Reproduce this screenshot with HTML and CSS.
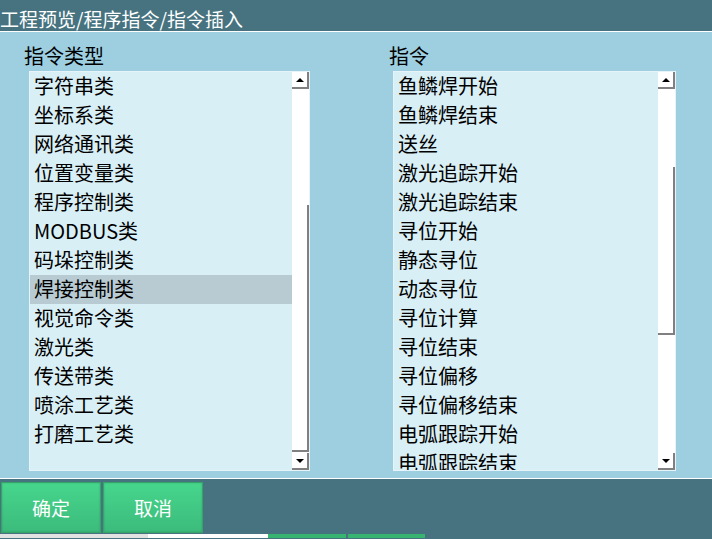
FILE: index.html
```html
<!DOCTYPE html>
<html lang="zh-CN">
<head>
    <meta charset="UTF-8">
    <meta name="viewport" content="width=device-width, initial-scale=1.0">
    <title>指令插入</title>
    <link rel="stylesheet" href="styles.css">
</head>
<body>
    <div class="screen">
        <div class="titlebar">工程预览/程序指令/指令插入</div>

        <div class="main">
            <div class="column column-left">
                <div class="label">指令类型</div>
                <div class="listbox">
                    <ul class="items">
                        <li>字符串类</li>
                        <li>坐标系类</li>
                        <li>网络通讯类</li>
                        <li>位置变量类</li>
                        <li>程序控制类</li>
                        <li>MODBUS类</li>
                        <li>码垛控制类</li>
                        <li class="selected">焊接控制类</li>
                        <li>视觉命令类</li>
                        <li>激光类</li>
                        <li>传送带类</li>
                        <li>喷涂工艺类</li>
                        <li>打磨工艺类</li>
                    </ul>
                    <div class="scrollbar">
                        <div class="sb-btn"><span class="arrow-up"></span></div>
                        <div class="sb-track">
                            <div class="sb-thumb" style="margin-top: 116px; height: 247px;"></div>
                        </div>
                        <div class="sb-btn"><span class="arrow-down"></span></div>
                    </div>
                </div>
            </div>

            <div class="column column-right">
                <div class="label">指令</div>
                <div class="listbox">
                    <ul class="items">
                        <li>鱼鳞焊开始</li>
                        <li>鱼鳞焊结束</li>
                        <li>送丝</li>
                        <li>激光追踪开始</li>
                        <li>激光追踪结束</li>
                        <li>寻位开始</li>
                        <li>静态寻位</li>
                        <li>动态寻位</li>
                        <li>寻位计算</li>
                        <li>寻位结束</li>
                        <li>寻位偏移</li>
                        <li>寻位偏移结束</li>
                        <li>电弧跟踪开始</li>
                        <li>电弧跟踪结束</li>
                    </ul>
                    <div class="scrollbar">
                        <div class="sb-btn"><span class="arrow-up"></span></div>
                        <div class="sb-track">
                            <div class="sb-thumb" style="margin-top: 78px; height: 168px;"></div>
                        </div>
                        <div class="sb-btn"><span class="arrow-down"></span></div>
                    </div>
                </div>
            </div>
        </div>

        <div class="footer">
            <button class="btn">确定</button>
            <button class="btn">取消</button>
        </div>

        <div class="taskstrip">
            <div class="ts-gray"></div>
            <div class="ts-white"></div>
            <div class="ts-green"></div>
            <div class="ts-green ts-green2"></div>
        </div>
    </div>
</body>
</html>
```

FILE: styles.css
```css
body {
    margin: 0;
    padding: 0;
    font-family: "Noto Sans CJK SC", "Noto Sans", sans-serif;
    background-color: #46737f;
}

.screen {
    width: 712px;
    height: 539px;
    display: flex;
    flex-direction: column;
    overflow: hidden;
}

.titlebar {
    height: 31px;
    border-bottom: 1px solid #ffffff;
    background: #46737f;
    color: #ffffff;
    font-size: 19px;
    line-height: 38px;
    white-space: nowrap;
    overflow: hidden;
}

.main {
    height: 446px;
    background: #9dcfe1;
    border-bottom: 1px solid #ffffff;
    display: flex;
}

.column {
    display: flex;
    flex-direction: column;
}

.column-left {
    margin-left: 24px;
    width: 286px;
}

.column-right {
    margin-left: 79px;
    width: 287px;
}

.label {
    height: 39px;
    font-size: 20px;
    line-height: 47px;
    color: #000000;
}

.column-left .listbox {
    margin-left: 5px;
}

.column-right .listbox {
    margin-left: 4px;
}

.listbox {
    height: 398px;
    border: 1px solid #e6f4f9;
    display: flex;
    background: #d9eff6;
}

.items {
    flex: 1;
    list-style-type: none;
    margin: 0;
    padding: 0;
    overflow: hidden;
}

.items li {
    height: 29px;
    line-height: 28px;
    padding-left: 4px;
    font-size: 20px;
    color: #000000;
    white-space: nowrap;
}

.items li.selected {
    background: #b9cbd2;
}

.scrollbar {
    width: 17px;
    background: #ffffff;
    display: flex;
    flex-direction: column;
}

.sb-btn {
    width: 15px;
    height: 15px;
    background: #ffffff;
    border-right: 2px solid #808080;
    border-bottom: 2px solid #808080;
    display: flex;
    justify-content: center;
    align-items: center;
}

.sb-track {
    flex: 1;
    display: flex;
    flex-direction: column;
}

.sb-thumb {
    width: 17px;
    background: #ffffff;
    border-right: 2px solid #808080;
    border-bottom: 2px solid #808080;
    box-sizing: border-box;
}

.arrow-up {
    width: 0;
    height: 0;
    border-left: 4px solid transparent;
    border-right: 4px solid transparent;
    border-bottom: 4px solid #000000;
}

.arrow-down {
    width: 0;
    height: 0;
    border-left: 4px solid transparent;
    border-right: 4px solid transparent;
    border-top: 4px solid #000000;
}

.footer {
    height: 55px;
    background: #46737f;
    display: flex;
    align-items: flex-start;
    padding-top: 3px;
    padding-left: 1px;
    gap: 2px;
    box-sizing: border-box;
}

.btn {
    width: 100px;
    height: 51px;
    border: 1px solid #34a469;
    background: linear-gradient(#46d68c, #3cbb7c);
    box-shadow: inset 0 0 2px rgba(0,0,0,0.2);
    color: #ffffff;
    font-family: "Noto Sans CJK SC", "Noto Sans", sans-serif;
    font-size: 19px;
    padding: 0;
    cursor: pointer;
}

.taskstrip {
    height: 4px;
    display: flex;
    background: #46737f;
}

.ts-gray {
    width: 148px;
    background: #e2e2e2;
}

.ts-white {
    width: 120px;
    background: #ffffff;
}

.ts-green {
    width: 78px;
    background: #37b570;
}

.ts-green2 {
    margin-left: 2px;
    width: 77px;
}
```
